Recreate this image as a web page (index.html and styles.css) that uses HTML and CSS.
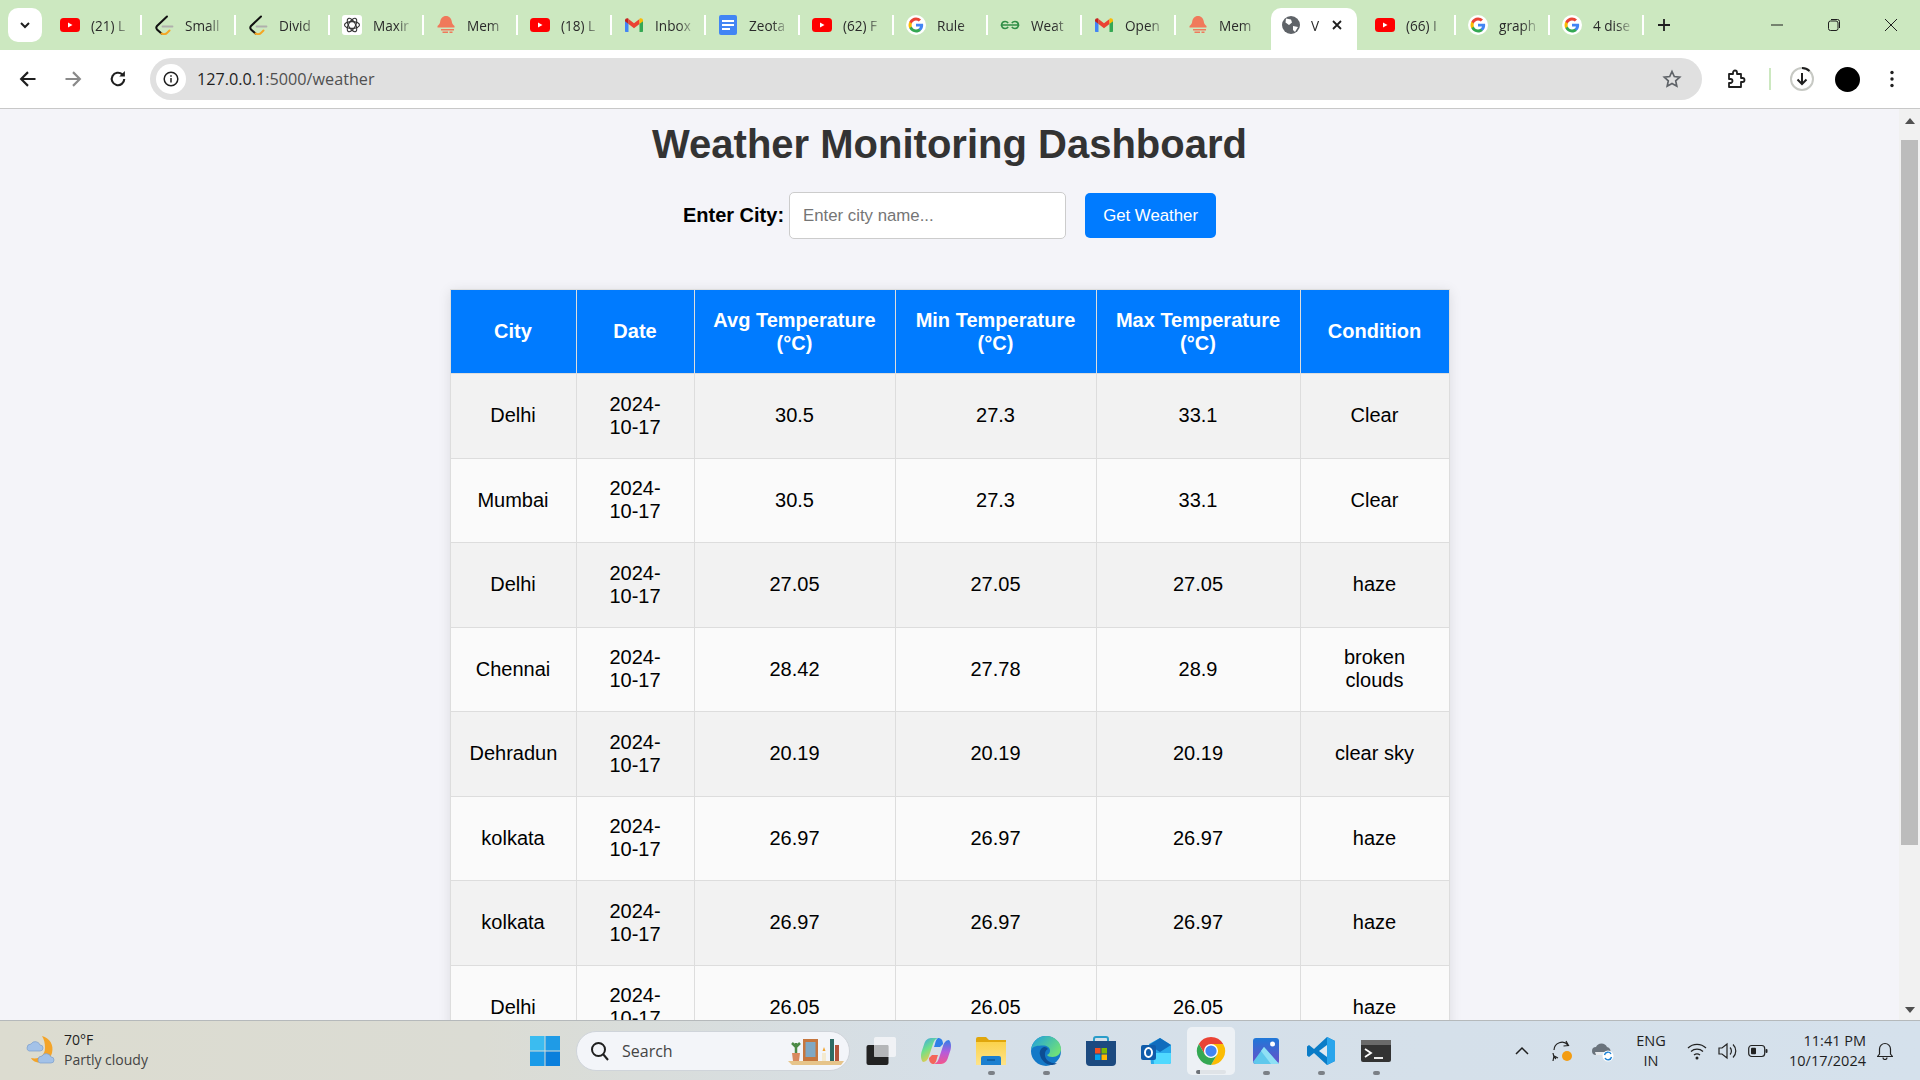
FILE: index.html
```html
<!DOCTYPE html>
<html lang="en">

<head>
  <meta charset="UTF-8">
  <title>Weather Monitoring Dashboard</title>
  <link rel="stylesheet" href="styles.css">
</head>

<body>
  <!-- shared favicons -->
  <svg class="defs" width="0" height="0">
    <symbol id="yt" viewBox="0 0 20 20">
      <rect y="3" width="20" height="14" rx="3.5" fill="#f00" />
      <path d="M8 7.500l4.500 2.500L8 12.500z" fill="#fff" />
    </symbol>
    <symbol id="leet" viewBox="0 0 20 20">
      <path d="M13 1.500L3 11c-1 1.200-.8 2.500 0 3.500l4.500 4" fill="none" stroke="#111" stroke-width="2" stroke-linecap="round" />
      <path d="M7.500 18.500c2 1 3.500.8 5 0l3-3" fill="none" stroke="#f5a623" stroke-width="2" stroke-linecap="round" />
      <path d="M8.500 11.500h10" stroke="#b0b0ac" stroke-width="1.800" stroke-linecap="round" />
    </symbol>
    <symbol id="gpt" viewBox="0 0 20 20">
      <rect width="20" height="20" rx="3" fill="#fff" />
      <g fill="none" stroke="#333" stroke-width="1.100">
        <ellipse cx="10" cy="10" rx="7.500" ry="3.400" />
        <ellipse cx="10" cy="10" rx="7.500" ry="3.400" transform="rotate(60 10 10)" />
        <ellipse cx="10" cy="10" rx="7.500" ry="3.400" transform="rotate(120 10 10)" />
      </g>
    </symbol>
    <symbol id="mem" viewBox="0 0 20 20">
      <path d="M10 1c3.400 0 5.400 2.600 5.800 5.500.3 2 1 3.300 2.700 4.500v1.500h-17V11c1.700-1.200 2.400-2.500 2.700-4.500C4.600 3.600 6.600 1 10 1z" fill="#f0795b" />
      <path d="M5 14h9v1.500H5zM6.500 16.500h5.500V18H6.500zM14 14h4v1.500h-4zM13.500 16.500h3V18h-3z" fill="#f0795b" />
    </symbol>
    <symbol id="gmail" viewBox="0 0 20 20">
      <path d="M1 5.500V16c0 .6.400 1 1 1h2.500V8.500z" fill="#4285f4" />
      <path d="M19 5.500V16c0 .6-.4 1-1 1h-2.500V8.500z" fill="#34a853" />
      <path d="M15.500 4l-5.500 4.200L4.500 4v5l5.500 4.200L15.500 9z" fill="#ea4335" />
      <path d="M1 5.500C1 3.500 3.200 2.600 4.500 3.700V9L1 6.300z" fill="#c5221f" />
      <path d="M19 5.500c0-2-2.200-2.900-3.500-1.800V9L19 6.300z" fill="#fbbc04" />
    </symbol>
    <symbol id="docs" viewBox="0 0 20 20">
      <rect x="1" width="18" height="20" rx="2" fill="#4285f4" />
      <path d="M4 5h12v2H4zM4 9h12v2H4zM4 13h8v2H4z" fill="#fff" />
    </symbol>
    <symbol id="goog" viewBox="0 0 24 24">
      <circle cx="12" cy="12" r="12" fill="#fff" />
      <path d="M20.600 12.200c0-.6-.1-1.200-.2-1.800H12v3.400h4.800c-.2 1.100-.8 2-1.800 2.700v2.200h2.900c1.700-1.600 2.700-3.900 2.700-6.500z" fill="#4285f4" />
      <path d="M12 21c2.400 0 4.500-.8 5.900-2.200L15 16.500c-.8.500-1.800.9-3 .9-2.300 0-4.300-1.600-5-3.700H4v2.300C5.500 19 8.500 21 12 21z" fill="#34a853" />
      <path d="M7 13.700c-.4-1.100-.4-2.300 0-3.400V8H4c-1.300 2.500-1.300 5.500 0 8z" fill="#fbbc04" />
      <path d="M12 6.600c1.300 0 2.500.5 3.400 1.300L18 5.400C16.400 3.900 14.300 3 12 3 8.500 3 5.500 5 4 8l3 2.300c.7-2.100 2.700-3.700 5-3.700z" fill="#ea4335" />
    </symbol>
    <symbol id="gfg" viewBox="0 0 20 20">
      <path d="M10 10H1.500c.3-2.200 1.700-3.500 3.600-3.500 1.300 0 2.400.6 3 1.600M10 10h8.500c-.3-2.200-1.700-3.500-3.600-3.500-1.300 0-2.400.6-3 1.600M1.500 10c.3 2.200 1.700 3.500 3.600 3.500 1.300 0 2.400-.6 3-1.600M18.500 10c-.3 2.200-1.700 3.500-3.600 3.500-1.300 0-2.400-.6-3-1.600" fill="none" stroke="#2f8d46" stroke-width="1.700" />
    </symbol>
    <linearGradient id="cop-a" x1="0" y1="0" x2="0.500" y2="1">
      <stop offset="0" stop-color="#3aa0f0" /><stop offset="0.500" stop-color="#6fe08a" /><stop offset="1" stop-color="#f7c844" />
    </linearGradient>
    <linearGradient id="cop-b" x1="0.500" y1="0" x2="0.500" y2="1">
      <stop offset="0" stop-color="#2f7fe8" /><stop offset="0.500" stop-color="#b45cdc" /><stop offset="1" stop-color="#f4568c" />
    </linearGradient>
    <linearGradient id="edge-a" x1="0" y1="0" x2="1" y2="0.600">
      <stop offset="0" stop-color="#1b9de2" /><stop offset="1" stop-color="#6fe07a" />
    </linearGradient>
    <linearGradient id="folder" x1="0" y1="0" x2="0" y2="1">
      <stop offset="0" stop-color="#fbd24c" /><stop offset="1" stop-color="#fde38a" />
    </linearGradient>
    <linearGradient id="photos" x1="0" y1="0" x2="0" y2="1">
      <stop offset="0" stop-color="#1f78d8" /><stop offset="1" stop-color="#6a4fc8" />
    </linearGradient>
  </svg>

  <div class="tabstrip">
    <button class="tab-search">
      <svg width="14" height="14" viewBox="0 0 14 14"><path d="M3 5l4 4 4-4" fill="none" stroke="#1f1f1f" stroke-width="2" /></svg>
    </button>
    <div class="tab"><svg class="fav"><use href="#yt" /></svg><span class="tab-title">(21) L</span></div>
    <div class="tab"><svg class="fav"><use href="#leet" /></svg><span class="tab-title">Small</span></div>
    <div class="tab"><svg class="fav"><use href="#leet" /></svg><span class="tab-title">Divid</span></div>
    <div class="tab"><svg class="fav"><use href="#gpt" /></svg><span class="tab-title">Maxir</span></div>
    <div class="tab"><svg class="fav"><use href="#mem" /></svg><span class="tab-title">Mem</span></div>
    <div class="tab"><svg class="fav"><use href="#yt" /></svg><span class="tab-title">(18) L</span></div>
    <div class="tab"><svg class="fav"><use href="#gmail" /></svg><span class="tab-title">Inbox</span></div>
    <div class="tab"><svg class="fav"><use href="#docs" /></svg><span class="tab-title">Zeota</span></div>
    <div class="tab"><svg class="fav"><use href="#yt" /></svg><span class="tab-title">(62) F</span></div>
    <div class="tab"><svg class="fav"><use href="#goog" /></svg><span class="tab-title">Rule</span></div>
    <div class="tab"><svg class="fav"><use href="#gfg" /></svg><span class="tab-title">Weat</span></div>
    <div class="tab"><svg class="fav"><use href="#gmail" /></svg><span class="tab-title">Open</span></div>
    <div class="tab tab-before-active"><svg class="fav"><use href="#mem" /></svg><span class="tab-title">Mem</span></div>
    <div class="tab-active">
      <svg class="fav" viewBox="0 0 20 20">
        <circle cx="10" cy="10" r="9" fill="#5f6368" />
        <path d="M5 3.500l5 1 1 3-3 2.500-3.500-2.500zM12 11l5 1-3 5-2-2z" fill="#fff" />
      </svg>
      <span class="tab-title">V</span>
      <svg class="tab-close" width="12" height="12" viewBox="0 0 12 12"><path d="M2 2l8 8M10 2l-8 8" stroke="#1f1f1f" stroke-width="1.800" /></svg>
    </div>
    <div class="tab tab-after-active"><svg class="fav"><use href="#yt" /></svg><span class="tab-title">(66) I</span></div>
    <div class="tab"><svg class="fav"><use href="#goog" /></svg><span class="tab-title">graph</span></div>
    <div class="tab"><svg class="fav"><use href="#goog" /></svg><span class="tab-title">4 dise</span></div>
    <svg class="new-tab" width="14" height="14" viewBox="0 0 14 14"><path d="M7 1v12M1 7h12" stroke="#1f1f1f" stroke-width="1.800" /></svg>
    <div class="win-controls">
      <svg width="14" height="14" viewBox="0 0 14 14"><path d="M1 7h12" stroke="#1f1f1f" /></svg>
      <svg width="14" height="14" viewBox="0 0 14 14"><rect x="1.500" y="3" width="9.500" height="9.500" rx="2" fill="none" stroke="#1f1f1f" /><path d="M4 1.500h6.500a2 2 0 0 1 2 2V10" fill="none" stroke="#1f1f1f" /></svg>
      <svg width="14" height="14" viewBox="0 0 14 14"><path d="M1 1l12 12M13 1L1 13" stroke="#1f1f1f" /></svg>
    </div>
  </div>

  <div class="toolbar">
    <svg class="nav-icon" viewBox="0 0 16 16"><path d="M14 8H3M8 2.500L2.500 8 8 13.500" fill="none" stroke="#1f1f1f" stroke-width="1.700" /></svg>
    <svg class="nav-icon" viewBox="0 0 16 16"><path d="M2 8h11M8 2.500L13.500 8 8 13.500" fill="none" stroke="#8a8a8a" stroke-width="1.700" /></svg>
    <svg class="nav-icon" viewBox="0 0 16 16"><path d="M13 8a5 5 0 1 1-1.600-3.700" fill="none" stroke="#1f1f1f" stroke-width="1.700" /><path d="M13.500 1.500v4.500H9z" fill="#1f1f1f" /></svg>
    <div class="omnibox">
      <span class="site-info">
        <svg width="16" height="16" viewBox="0 0 16 16"><circle cx="8" cy="8" r="6.800" fill="none" stroke="#1f1f1f" stroke-width="1.500" /><path d="M8 7v4.500M8 4.300v1.500" stroke="#1f1f1f" stroke-width="1.500" /></svg>
      </span>
      <span class="url"><span class="url-host">127.0.0.1</span>:5000/weather</span>
      <svg class="star" width="20" height="20" viewBox="0 0 20 20"><path d="M10 2.500l2.300 5 5.400.6-4 3.700 1.100 5.400L10 14.500l-4.800 2.700 1.100-5.400-4-3.700 5.400-.6z" fill="none" stroke="#5f6368" stroke-width="1.700" /></svg>
    </div>
    <svg class="puzzle" width="20" height="20" viewBox="0 0 20 20"><path d="M3 5h4V3.500a2 2 0 0 1 4 0V5h4v4h1.500a2 2 0 0 1 0 4H15v5H3v-4h1.500a2 2 0 0 0 0-4H3z" fill="none" stroke="#1f1f1f" stroke-width="1.800" stroke-linejoin="round" /></svg>
    <span class="toolbar-sep"></span>
    <svg class="download" width="26" height="26" viewBox="0 0 26 26">
      <circle cx="13" cy="13" r="11" fill="none" stroke="#c7c9c4" stroke-width="2" />
      <path d="M13 2a11 11 0 0 1 7.500 3" fill="none" stroke="#1f1f1f" stroke-width="2" />
      <path d="M13 7v11M8.500 13.500L13 18l4.500-4.500" fill="none" stroke="#1f1f1f" stroke-width="2" />
    </svg>
    <span class="avatar"></span>
    <svg class="kebab" width="4" height="18" viewBox="0 0 4 18"><circle cx="2" cy="2.500" r="1.700" fill="#1f1f1f" /><circle cx="2" cy="9" r="1.700" fill="#1f1f1f" /><circle cx="2" cy="15.500" r="1.700" fill="#1f1f1f" /></svg>
  </div>

  <div class="viewport">
    <div class="page">
      <h1>Weather Monitoring Dashboard</h1>

      <form class="city-form">
        <label for="city">Enter City:</label>
        <input type="text" id="city" placeholder="Enter city name...">
        <button type="button">Get Weather</button>
      </form>

      <table class="weather">
        <colgroup>
          <col class="c-city"><col class="c-date"><col class="c-temp"><col class="c-temp"><col class="c-max"><col class="c-cond">
        </colgroup>
        <thead>
          <tr>
            <th>City</th>
            <th>Date</th>
            <th>Avg Temperature (°C)</th>
            <th>Min Temperature (°C)</th>
            <th>Max Temperature (°C)</th>
            <th>Condition</th>
          </tr>
        </thead>
        <tbody>
          <tr><td>Delhi</td><td>2024-10-17</td><td>30.5</td><td>27.3</td><td>33.1</td><td>Clear</td></tr>
          <tr><td>Mumbai</td><td>2024-10-17</td><td>30.5</td><td>27.3</td><td>33.1</td><td>Clear</td></tr>
          <tr><td>Delhi</td><td>2024-10-17</td><td>27.05</td><td>27.05</td><td>27.05</td><td>haze</td></tr>
          <tr><td>Chennai</td><td>2024-10-17</td><td>28.42</td><td>27.78</td><td>28.9</td><td>broken clouds</td></tr>
          <tr><td>Dehradun</td><td>2024-10-17</td><td>20.19</td><td>20.19</td><td>20.19</td><td>clear sky</td></tr>
          <tr><td>kolkata</td><td>2024-10-17</td><td>26.97</td><td>26.97</td><td>26.97</td><td>haze</td></tr>
          <tr><td>kolkata</td><td>2024-10-17</td><td>26.97</td><td>26.97</td><td>26.97</td><td>haze</td></tr>
          <tr><td>Delhi</td><td>2024-10-17</td><td>26.05</td><td>26.05</td><td>26.05</td><td>haze</td></tr>
        </tbody>
      </table>
    </div>

    <div class="scrollbar">
      <svg width="10" height="6" viewBox="0 0 10 6"><path d="M5 0l5 6H0z" fill="#505050" /></svg>
      <div class="scroll-track"><div class="scroll-thumb"></div></div>
      <svg width="10" height="6" viewBox="0 0 10 6"><path d="M0 0h10L5 6z" fill="#505050" /></svg>
    </div>
  </div>

  <div class="taskbar">
    <div class="weather-widget">
      <svg width="34" height="34" viewBox="0 0 34 34">
        <path d="M18 2c8 2 12 9 10 17-2 7-9 11-16 9-2-.6-4-2-5-4 8 2 14-3 14-10 0-5-1-9-3-12z" fill="#f4a428" />
        <path d="M3 14a4 4 0 0 1 4-4 5 5 0 0 1 9 1 3 3 0 0 1 0 6H5a3 3 0 0 1-2-3z" fill="#a3c2e8" stroke="#7d9fcb" stroke-width="0.700" />
        <path d="M14 26a4 4 0 0 1 4-4 5 5 0 0 1 9 1 3 3 0 0 1 0 6H16a3 3 0 0 1-2-3z" fill="#a3c2e8" stroke="#7d9fcb" stroke-width="0.700" />
      </svg>
      <div class="widget-text">
        <div class="widget-temp">70°F</div>
        <div class="widget-cond">Partly cloudy</div>
      </div>
    </div>

    <svg class="start" width="30" height="30" viewBox="0 0 30 30">
      <rect width="14.500" height="14.500" fill="#3bbcf0" /><rect x="15.500" width="14.500" height="14.500" fill="#1f9be6" />
      <rect y="15.500" width="14.500" height="14.500" fill="#1a9be8" /><rect x="15.500" y="15.500" width="14.500" height="14.500" fill="#0a7fdc" />
    </svg>

    <div class="search">
      <svg width="20" height="20" viewBox="0 0 20 20"><circle cx="8.500" cy="8.500" r="6.500" fill="none" stroke="#1f1f1f" stroke-width="2" /><path d="M13 13l5 6" stroke="#1f1f1f" stroke-width="2" /></svg>
      <span class="search-label">Search</span>
      <svg class="search-art" width="60" height="32" viewBox="0 0 60 32">
        <path d="M2 26h56l-3 4H6z" fill="#e6c48a" />
        <rect x="17" y="4" width="15" height="22" fill="#c5763e" /><rect x="19.500" y="7" width="10" height="15" fill="#7fa8c4" />
        <path d="M6 18h8l-1 8H7z" fill="#d98a5f" /><path d="M10 18V8M10 12l-4-4M10 12l4-4" stroke="#4c8a46" stroke-width="2.500" />
        <rect x="36" y="18" width="4" height="8" fill="#f4ead0" /><path d="M38 12l1.500 4h-3z" fill="#f3a530" />
        <rect x="44" y="4" width="4" height="22" fill="#2f6b63" /><rect x="49" y="10" width="4" height="16" fill="#b5533a" />
      </svg>
    </div>

    <div class="task-icons">
      <span class="task-item">
        <svg width="30" height="28" viewBox="0 0 30 28"><rect x="0.500" y="8" width="22" height="20" rx="2" fill="#222" /><rect x="8" y="0" width="22" height="20" rx="2" fill="#f4f6f8" opacity="0.850" /><rect x="8" y="8" width="14.500" height="12" rx="1" fill="#b4b6b8" /></svg>
      </span>
      <span class="task-item">
        <svg width="30" height="30" viewBox="0 0 30 30">
          <path d="M11 2h6c-3 1-4 3-5 6l-4 12c-.8 3-3 6-6 6-2-2-2.500-6-1.500-10l3-9C5 3 8 2 11 2z" fill="url(#cop-a)" />
          <path d="M19 28h-6c3-1 4-3 5-6l4-12c.8-3 3-6 6-6 2 2 2.500 6 1.500 10l-3 9c-1.500 4-4.500 5-7.500 5z" fill="url(#cop-b)" />
          <path d="M17 2c3 0 5 2 5 6l-3 3-6 0 1-3c.5-3 1.500-5 3-6z" fill="#2f7fe8" />
          <path d="M13 28c-3 0-5-2-5-6l3-3 6 0-1 3c-.5 3-1.500 5-3 6z" fill="#f4665a" />
        </svg>
      </span>
      <span class="task-item task-open">
        <svg width="30" height="28" viewBox="0 0 30 28"><path d="M0 2a2 2 0 0 1 2-2h8l3 3h17v6H0z" fill="#e0a60c" /><path d="M0 5h30v23H0z" fill="url(#folder)" /><path d="M5 21a2 2 0 0 1 2-2h16a2 2 0 0 1 2 2v7H5z" fill="#1b7fd0" /><path d="M11 23h8" stroke="#0c4f8c" stroke-width="1.200" /></svg>
      </span>
      <span class="task-item task-open">
        <svg width="30" height="30" viewBox="0 0 30 30">
          <circle cx="15" cy="15" r="15" fill="#1479c8" />
          <path d="M0 14C1 6 7 0 15 0c8.500 0 15 6 15 13 0 5-4 8-8.500 8-3 0-5-1-5.500-2 2-1 3-2.500 3-4.500 0-3-3-5-7-5C7 9.500 2 10 0 14z" fill="url(#edge-a)" />
          <path d="M13 11c-3 1-5 4-4 8 1 5 6 10 12 10 2 0 4-1 5-2-5 1-11-2-12-7-.5-3 .5-6 3-7-1-1.500-2.500-2.200-4-2z" fill="#0c4d94" />
        </svg>
      </span>
      <span class="task-item">
        <svg width="30" height="30" viewBox="0 0 30 30"><path d="M8 7V3a2 2 0 0 1 2-2h10a2 2 0 0 1 2 2v4" fill="none" stroke="#2a9dc9" stroke-width="2" /><path d="M0 5h30v21a4 4 0 0 1-4 4H4a4 4 0 0 1-4-4z" fill="#1c4a80" /><rect x="9" y="12" width="5.500" height="5.500" fill="#f25022" /><rect x="15.500" y="12" width="5.500" height="5.500" fill="#7fba00" /><rect x="9" y="18.500" width="5.500" height="5.500" fill="#00a4ef" /><rect x="15.500" y="18.500" width="5.500" height="5.500" fill="#ffb900" /></svg>
      </span>
      <span class="task-item">
        <svg width="30" height="28" viewBox="0 0 30 28"><path d="M8 7l11-6 11 7v17a2 2 0 0 1-2 2H10z" fill="#28a8ea" /><path d="M19 1l11 7-11 7-11-7z" fill="#0f6cbd" /><path d="M12 16h18v9a2 2 0 0 1-2 2H13z" fill="#50d9ff" /><rect x="0" y="8" width="15" height="15" rx="2" fill="#0f5cab" /><ellipse cx="7.500" cy="15.500" rx="3.500" ry="4.500" fill="none" stroke="#fff" stroke-width="2" /></svg>
      </span>
      <span class="task-item task-active">
        <svg width="30" height="30" viewBox="0 0 32 32">
          <path d="M3 8.500A15 15 0 0 1 29 8.500H16L16 16 9.500 19.750z" fill="#ea4335" />
          <path d="M29 8.500A15 15 0 0 1 16 31L22.500 19.750 16 16 16 8.500z" fill="#fbbc04" />
          <path d="M16 31A15 15 0 0 1 3 8.500L9.500 19.750 16 16 22.500 19.750z" fill="#34a853" />
          <circle cx="16" cy="16" r="7.500" fill="#fff" /><circle cx="16" cy="16" r="6" fill="#4285f4" />
        </svg>
        <span class="active-pill"></span>
      </span>
      <span class="task-item task-open">
        <svg width="26" height="26" viewBox="0 0 26 26"><rect width="26" height="26" rx="3" fill="url(#photos)" /><path d="M0 24L11 9l8 9 7 8H3a3 3 0 0 1-3-2z" fill="#5fc8ec" /><path d="M11 9l8 9 7 8h-8L8 13z" fill="#8fe0f5" /><circle cx="19.500" cy="6" r="2.500" fill="#fff" /></svg>
      </span>
      <span class="task-item task-open">
        <svg width="30" height="30" viewBox="0 0 30 30"><path d="M21 1l8 4v20l-8 4L8 17l-5 4-2-1.500V10.500L3 9l5 4z" fill="#0a7cc7" /><path d="M21 9v12l-8-6z" fill="#e0e9f1" /><path d="M21 1l8 4v20l-8 4z" fill="#2aa5ec" /></svg>
      </span>
      <span class="task-item task-open">
        <svg width="30" height="22" viewBox="0 0 30 22"><rect width="30" height="22" rx="2" fill="#333" /><rect width="30" height="5" fill="#6a6a6a" /><path d="M4 9l6 4-6 4" fill="none" stroke="#fff" stroke-width="1.800" /><path d="M13 18h9" stroke="#fff" stroke-width="1.800" /></svg>
      </span>
    </div>

    <div class="tray">
      <svg class="tray-chevron" width="14" height="14" viewBox="0 0 14 14"><path d="M1 10l6-6 6 6" fill="none" stroke="#1f1f1f" stroke-width="1.500" /></svg>
      <svg class="tray-sync" width="22" height="24" viewBox="0 0 22 24"><path d="M3 11a8 8 0 0 1 14-5M15 2l2.500 4.500-5 .5M5 20a8 8 0 0 1-3-6M2 22l1-5 4 2" fill="none" stroke="#222" stroke-width="1.200" /><circle cx="16" cy="17" r="5" fill="#f39c12" /></svg>
      <svg class="tray-cloud" width="22" height="22" viewBox="0 0 22 22"><path d="M4 15a4 4 0 0 1 0-8 6 6 0 0 1 11 0 4 4 0 0 1 3 6l-2 2z" fill="#6a737c" /><path d="M3 12h11v3H4z" fill="#e8ebee" /><circle cx="16" cy="16" r="5.500" fill="#fff" /><path d="M12.500 15a3.500 3.500 0 0 1 6.500-1M19.500 17a3.500 3.500 0 0 1-6.500 1" fill="none" stroke="#1b82d6" stroke-width="1.400" /></svg>
      <div class="lang">ENG<br>IN</div>
      <svg class="tray-wifi" width="20" height="18" viewBox="0 0 20 18"><path d="M1 6a13 13 0 0 1 18 0M4 9.500a9 9 0 0 1 12 0M7 13a5 5 0 0 1 6 0" fill="none" stroke="#222" stroke-width="1.300" /><circle cx="10" cy="16" r="1.500" fill="#222" /></svg>
      <svg class="tray-vol" width="20" height="20" viewBox="0 0 20 20"><path d="M1 7h3l5-4v14l-5-4H1z" fill="none" stroke="#222" stroke-width="1.200" /><path d="M12 6.500a5 5 0 0 1 0 7M15 3.500a9 9 0 0 1 0 13" fill="none" stroke="#222" stroke-width="1.200" /></svg>
      <svg class="tray-batt" width="20" height="14" viewBox="0 0 20 14"><rect x="0.700" y="1.500" width="16" height="11" rx="3" fill="none" stroke="#222" stroke-width="1.200" /><rect x="3" y="3.800" width="5" height="6.400" rx="1" fill="#222" /><rect x="17.500" y="5" width="2" height="4" rx="1" fill="#222" /></svg>
      <div class="clock">11:41 PM<br>10/17/2024</div>
      <svg class="tray-bell" width="16" height="18" viewBox="0 0 16 18"><path d="M2.500 12V7a5.500 5.500 0 0 1 11 0v5l2 2.500H.5zM6 15.500a2 2 0 0 0 4 0" fill="none" stroke="#222" stroke-width="1.200" /></svg>
    </div>
  </div>
</body>

</html>
```

FILE: styles.css
```css
* {
  box-sizing: border-box;
}

html,
body {
  height: 100%;
  margin: 0;
  overflow: hidden;
}

body {
  display: flex;
  flex-direction: column;
  font-family: "Liberation Sans", Arial, sans-serif;
}

.defs {
  position: absolute;
}

/* Browser tab strip */
.tabstrip {
  display: flex;
  align-items: center;
  height: 50px;
  flex: none;
  padding-left: 8px;
  background-color: #cce8c0;
  font-family: "Open Sans", sans-serif;
  font-size: 13.600px;
  color: #2a2a2a;
}

.tab-search {
  width: 34px;
  height: 34px;
  margin-right: 5px;
  padding: 0;
  border: none;
  border-radius: 10px;
  background-color: #fff;
  display: flex;
  align-items: center;
  justify-content: center;
}

.tab {
  position: relative;
  display: flex;
  align-items: center;
  width: 94px;
  height: 50px;
  padding-left: 13px;
  flex: none;
}

.tab::after {
  content: "";
  position: absolute;
  right: -1px;
  top: 15px;
  width: 2px;
  height: 20px;
  background-color: #fff;
}

.tab-before-active::after {
  display: none;
}

.tab-after-active {
  width: 98px;
  padding-left: 18px;
}

.fav {
  width: 20px;
  height: 20px;
  flex: none;
}

.tab-title {
  width: 42px;
  margin-left: 11px;
  white-space: nowrap;
  -webkit-mask-image: linear-gradient(to right, #000 55%, rgba(0, 0, 0, 0.15) 92%);
  mask-image: linear-gradient(to right, #000 55%, rgba(0, 0, 0, 0.15) 92%);
}

.tab-active {
  display: flex;
  align-items: center;
  width: 86px;
  height: 42px;
  margin-top: 8px;
  margin-left: 2px;
  padding: 0 0 8px 10px;
  flex: none;
  border-radius: 10px 10px 0 0;
  background-color: #fff;
}

.tab-active .tab-title {
  width: 14px;
  margin-left: 10px;
}

.tab-close {
  margin-left: 6px;
}

.new-tab {
  margin-left: 14px;
}

.win-controls {
  display: flex;
  align-items: center;
  gap: 43px;
  margin-left: auto;
  margin-right: 22px;
}

/* Browser toolbar */
.toolbar {
  display: flex;
  align-items: center;
  height: 59px;
  flex: none;
  padding: 0 18px;
  background-color: #fff;
  border-bottom: 1px solid #c8c8c8;
  border-radius: 10px 10px 0 0;
}

.nav-icon {
  width: 20px;
  height: 20px;
  margin-right: 25px;
  flex: none;
}

.omnibox {
  display: flex;
  align-items: center;
  width: 1552px;
  height: 42px;
  margin-left: -3px;
  padding: 0 20px 0 6px;
  flex: none;
  border-radius: 21px;
  background-color: #e0e0e0;
  font-family: "Open Sans", sans-serif;
  font-size: 16.200px;
  color: #505050;
}

.site-info {
  display: flex;
  align-items: center;
  justify-content: center;
  width: 30px;
  height: 30px;
  margin-right: 11px;
  border-radius: 50%;
  background-color: #fff;
}

.url-host {
  color: #1f1f1f;
}

.star {
  margin-left: auto;
}

.puzzle {
  margin-left: 24px;
  flex: none;
}

.toolbar-sep {
  width: 2px;
  height: 22px;
  margin-left: 23px;
  flex: none;
  background-color: #cce8c0;
}

.download {
  margin-left: 18px;
  flex: none;
}

.avatar {
  width: 25px;
  height: 25px;
  margin-left: 20px;
  flex: none;
  border-radius: 50%;
  background-color: #000;
}

.kebab {
  margin-left: 30px;
  flex: none;
}

/* Page area */
.viewport {
  display: flex;
  flex: 1;
  min-height: 0;
  background-color: #f4f4f9;
}

.page {
  flex: 1;
  min-width: 0;
  overflow: hidden;
  text-align: center;
}

h1 {
  margin: 13px 0 25px;
  font-size: 40px;
  color: #333;
}

.city-form {
  display: flex;
  justify-content: center;
  align-items: center;
  margin-bottom: 50px;
}

.city-form label {
  margin-right: 5px;
  font-size: 20px;
  font-weight: bold;
  color: #000;
}

.city-form input {
  width: 277px;
  height: 47px;
  padding: 0 13px;
  border: 1.500px solid #ccc;
  border-radius: 5px;
  font-family: inherit;
  font-size: 16.800px;
}

.city-form button {
  width: 131px;
  height: 45px;
  margin-left: 19px;
  border: none;
  border-radius: 5px;
  background-color: #007bff;
  color: #fff;
  font-family: inherit;
  font-size: 16.800px;
}

.weather {
  width: 999px;
  margin: 0 auto;
  table-layout: fixed;
  border-collapse: collapse;
  box-shadow: 0 2px 12px rgba(0, 0, 0, 0.1);
  font-size: 20px;
  color: #000;
}

.c-city { width: 126px; }
.c-date { width: 118px; }
.c-temp { width: 201px; }
.c-max { width: 204px; }
.c-cond { width: 149px; }

.weather th,
.weather td {
  padding: 0 19px;
  border: 1px solid #ddd;
  text-align: center;
}

.weather th {
  height: 84px;
  padding: 0 17px;
  background-color: #007bff;
  color: #fff;
  font-weight: bold;
}

.weather td {
  height: 84.500px;
}

.weather tbody tr:nth-child(odd) {
  background-color: #f2f2f2;
}

.weather tbody tr:nth-child(even) {
  background-color: #fafafa;
}

/* Fake scrollbar */
.scrollbar {
  display: flex;
  flex-direction: column;
  align-items: center;
  width: 21px;
  flex: none;
  padding: 9px 0 7px;
  background-color: #f1f1f1;
}

.scroll-track {
  flex: 1;
  width: 100%;
  padding: 16px 2px 0 2px;
}

.scroll-thumb {
  height: 705px;
  background-color: #bcbcbc;
}

/* Windows taskbar */
.taskbar {
  display: flex;
  align-items: center;
  height: 60px;
  flex: none;
  border-top: 1px solid #b5b9bb;
  background: linear-gradient(to right, #dcdcd0 0%, #dbdcd4 25%, #d5dfe8 50%, #d5e1ec 100%);
  font-family: "Open Sans", sans-serif;
  color: #1f1f1f;
}

.weather-widget {
  display: flex;
  align-items: center;
  width: 530px;
  padding-left: 24px;
  flex: none;
}

.widget-text {
  margin-left: 6px;
  margin-top: -2px;
  font-size: 14px;
  line-height: 20px;
}

.widget-cond {
  color: #444;
}

.start {
  flex: none;
}

.search {
  display: flex;
  align-items: center;
  width: 274px;
  height: 40px;
  margin-left: 16px;
  padding-left: 13px;
  flex: none;
  border-radius: 20px;
  border: 1px solid #cfd4da;
  background-color: #f3f5f9;
  font-size: 16px;
  color: #444;
}

.search-label {
  margin-left: 12px;
}

.search-art {
  margin-left: auto;
  margin-right: 3px;
}

.task-icons {
  display: flex;
  align-items: center;
  margin-left: 3px;
}

.task-item {
  position: relative;
  display: flex;
  align-items: center;
  justify-content: center;
  width: 55px;
  height: 50px;
  flex: none;
}

.task-open::after {
  content: "";
  position: absolute;
  bottom: 1px;
  left: 25px;
  width: 7px;
  height: 4px;
  border-radius: 2px;
  background-color: #7b8086;
}

.task-active {
  width: 48px;
  height: 48px;
  margin: 0 3.500px;
  border-radius: 5px;
  background-color: #edf1f5;
}

.active-pill {
  position: absolute;
  bottom: 1px;
  left: 9px;
  width: 30px;
  height: 4px;
  border-radius: 2px;
  background: linear-gradient(to right, #6d7278 12%, #dfe3e7 12%);
}

.tray {
  display: flex;
  align-items: center;
  margin-left: auto;
  padding-right: 27px;
  font-size: 14.500px;
}

.tray-sync { margin-left: 22px; }
.tray-cloud { margin-left: 19px; }
.lang { margin-left: 17px; }
.tray-wifi { margin-left: 16px; }
.tray-vol { margin-left: 11px; }
.tray-batt { margin-left: 10px; }
.clock { margin-left: 8px; }
.tray-bell { margin-left: 11px; }

.lang {
  width: 40px;
  line-height: 20px;
  text-align: center;
}

.clock {
  width: 90px;
  line-height: 20px;
  text-align: right;
}
```
